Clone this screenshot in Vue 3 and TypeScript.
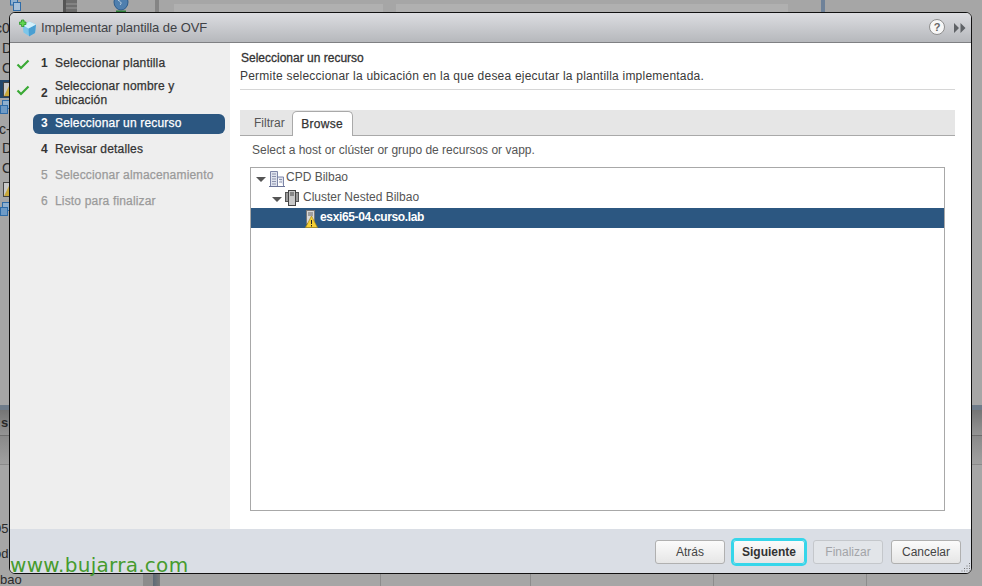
<script setup lang="ts">
interface Step { n: number; label: string; state: 'done' | 'active' | 'todo' | 'off' }
const steps: Step[] = [
  { n: 1, label: 'Seleccionar plantilla', state: 'done' },
  { n: 2, label: 'Seleccionar nombre y ubicación', state: 'done' },
  { n: 3, label: 'Seleccionar un recurso', state: 'active' },
  { n: 4, label: 'Revisar detalles', state: 'todo' },
  { n: 5, label: 'Seleccionar almacenamiento', state: 'off' },
  { n: 6, label: 'Listo para finalizar', state: 'off' },
]
const gridLines: number[] = [380, 530, 713, 866]
const blueIconTops: number[] = [100, 202]
const yellowIconTops: number[] = [82, 182]
</script>

<template>
  <div class="page">
    <div class="panel p1"></div>
    <div class="panel p2"></div>
    <div class="band"></div>
    <div class="band2"></div>
    <div class="vbar"></div>
    <div class="vbar2"></div>
    <div class="vbar3"></div>
    <i v-for="x in gridLines" :key="x" class="gline" :style="{ left: x + 'px' }"></i>
    <div class="block"></div>

    <div class="bg-frag f1">c0</div>
    <div class="bg-frag f2">D</div>
    <div class="bg-frag f3">C</div>
    <div class="bg-frag f4">c-</div>
    <div class="bg-frag f5">D</div>
    <div class="bg-frag f6">C</div>
    <div class="bg-frag f7">s</div>
    <div class="bg-frag f8">05</div>
    <div class="bg-frag f9">od</div>
    <div class="bg-frag f10">bao</div>

    <svg class="bg-icon" style="left:10px;top:0" width="11" height="12" viewBox="0 0 11 12"><rect x=".5" y="-3" width="7" height="8" fill="#8fb0cf" stroke="#2f6ca8"/><rect x="3.5" y="2.500" width="7" height="8" fill="#a5c0da" stroke="#2f6ca8"/></svg>
    <svg class="bg-icon" style="left:63px;top:0" width="14" height="12" viewBox="0 0 14 12"><rect width="14" height="12" fill="#6d6d6d"/><path d="M0 4h14M0 8h14" stroke="#9a9a9a"/><rect width="3" height="12" fill="#555"/></svg>
    <svg class="bg-icon" style="left:113px;top:0" width="16" height="13" viewBox="0 0 16 13"><ellipse cx="8" cy="2" rx="7" ry="8" fill="#4f7fae" stroke="#2c5c8c"/><path d="M5 0c3 2 4 3 2 5" stroke="#c6d8e6" fill="none"/><rect x="3" y="10.500" width="10" height="2" fill="#2f7f3a"/></svg>
    <svg v-for="t in yellowIconTops" :key="'y' + t" class="bg-icon" :style="{ left: '3px', top: t + 'px' }" width="6" height="15" viewBox="0 0 6 15"><rect x=".5" y=".5" width="9" height="14" fill="#c9c9c9" stroke="#444"/><path d="M6 4L1 14h5z" fill="#c8a83a"/></svg>
    <svg v-for="t in blueIconTops" :key="'b' + t" class="bg-icon" :style="{ left: '0', top: t + 'px' }" width="9" height="15" viewBox="0 0 9 15"><rect x="2.500" y=".5" width="7" height="8" fill="#8fb0cf" stroke="#2f6ca8"/><rect x=".5" y="5.500" width="7" height="8" fill="#6f9bc6" stroke="#2f6ca8"/></svg>

    <section class="dialog">
      <header class="title">
        <svg class="logo" width="18" height="18" viewBox="0 0 18 18">
          <path d="M3.500 6l7-3.500 6.500 3-1 8.500-6 3-5.500-3.500z" fill="#7cc6ea"/>
          <path d="M9.500 9.500l7.500-4-1 8.500-6 3.500z" fill="#4a9fd2"/>
          <path d="M3.500 6l7-3.500 6.500 3-7.500 4z" fill="#d3f0fb"/>
          <path d="M2.500 1h2.500v2h2v2.500h-2v2H2.500v-2h-2V3h2z" fill="#62d552" stroke="#1f8f1f" stroke-width=".7"/>
        </svg>
        <span class="title-text">Implementar plantilla de OVF</span>
        <span class="help">?</span>
        <svg class="more" width="12" height="10" viewBox="0 0 12 10"><path d="M0 0l5 5-5 5zM6.500 0l5 5-5 5z" fill="#5f6266"/></svg>
      </header>

      <div class="body">
        <nav class="nav">
          <div v-for="s in steps" :key="s.n" class="step" :class="s.state">
            <svg v-if="s.state === 'done'" class="check" width="14" height="11" viewBox="0 0 14 11"><path d="M1.500 5.500l3.500 3.500 7.500-7.500" fill="none" stroke="#3aa935" stroke-width="2.200"/></svg>
            <div class="pill">
              <span class="num">{{ s.n }}</span>
              <span class="lbl">{{ s.label }}</span>
            </div>
          </div>
        </nav>

        <main class="main">
          <h2 class="h">Seleccionar un recurso</h2>
          <p class="sub">Permite seleccionar la ubicación en la que desea ejecutar la plantilla implementada.</p>
          <div class="tabs">
            <span class="tab">Filtrar</span>
            <span class="tab on">Browse</span>
          </div>
          <p class="hint">Select a host or clúster or grupo de recursos or vapp.</p>
          <div class="tree">
            <div class="row r0">
              <i class="tri"></i>
              <svg class="ico" width="16" height="17" viewBox="0 0 16 17"><path d="M1.500 16V1.500h7V16M8.500 7h6v9" fill="#dfe3ee" stroke="#7e86a8"/><path d="M3 4h4M3 6.500h4M3 9h4M3 11.500h4M3 14h4M10 9.500h3M10 12h3" stroke="#8d93ad"/><path d="M0 16.500h16" stroke="#6c7498"/></svg>
              <span>CPD Bilbao</span>
            </div>
            <div class="row r1">
              <i class="tri"></i>
              <svg class="ico" width="14" height="16" viewBox="0 0 14 16"><rect x="0.500" y="2.500" width="3" height="9" fill="#9a9a9a" stroke="#555"/><rect x="10.500" y="2.500" width="3" height="9" fill="#9a9a9a" stroke="#555"/><rect x="3.500" y="0.500" width="7" height="15" fill="#c9c9c9" stroke="#444"/><path d="M5 3h4M5 5h4" stroke="#444"/></svg>
              <span>Cluster Nested Bilbao</span>
            </div>
            <div class="row sel">
              <svg class="ico" width="13" height="18" viewBox="0 0 13 18"><rect x="1.500" y="0.500" width="8" height="13" fill="#d8d8d8" stroke="#777"/><path d="M3 3h5M3 5h5" stroke="#666"/><path d="M6.500 6l6 11.500H.5z" fill="#f5cf35" stroke="#a98a16" stroke-width=".7"/><path d="M6.500 10v4M6.500 15v1.500" stroke="#222"/></svg>
              <span>esxi65-04.curso.lab</span>
            </div>
          </div>
        </main>
      </div>

      <footer class="foot">
        <button class="btn">Atrás</button>
        <button class="btn primary">Siguiente</button>
        <button class="btn dis">Finalizar</button>
        <button class="btn">Cancelar</button>
        <svg class="grip" width="11" height="11" viewBox="0 0 11 11"><path d="M9 1h1v1H9zM6.500 3.500h1v1h-1zM9 3.500h1v1H9zM4 6h1v1H4zM6.500 6h1v1h-1zM9 6h1v1H9zM1.500 8.500h1v1h-1zM4 8.500h1v1H4zM6.500 8.500h1v1h-1zM9 8.500h1v1H9z" fill="#777"/></svg>
      </footer>
    </section>

    <div class="mark">www.bujarra.com</div>
  </div>
</template>

<style>
html, body { margin: 0; }
</style>

<style scoped>
.page {
  position: relative;
  width: 982px;
  height: 586px;
  overflow: hidden;
  background: #a6a6a6;
  font-family: "Liberation Sans", Arial, sans-serif;
  font-size: 12px;
  color: #333;
}
.bg-frag { position: absolute; left: 2px; color: #2a2a2a; font-size: 14px; line-height: 16px; }
.f1 { top: 20px; left: -5px; } .f2 { top: 40px; } .f3 { top: 60px; } .f4 { top: 121px; left: -1px; }
.f5 { top: 140px; } .f6 { top: 160px; } .f7 { top: 415px; left: 1px; font-weight: 700; font-size: 13px; }
.f8 { top: 521px; left: -6px; font-size: 13px; }
.f9 { top: 546px; left: -6px; font-size: 13px; }
.f10 { top: 574px; left: 0; font-size: 13px; line-height: 12px; }
.panel { position: absolute; top: 4px; height: 8px; background: #b0b0b0; }
.p1 { left: 174px; width: 209px; }
.p2 { left: 396px; width: 392px; }
.band {
  position: absolute; left: 0; right: 0; top: 405px; height: 31px; box-sizing: border-box;
  background: linear-gradient(#757575, #949494); border-top: 5px solid #6f7c8a; border-bottom: 1px solid #6e6e6e;
}
.band2 {
  position: absolute; left: 0; right: 0; top: 436px; height: 29px;
  background: linear-gradient(#8a8a8a, #a0a0a0); border-bottom: 1px solid #8a8a8a; box-sizing: border-box;
}
.vbar { position: absolute; left: 143px; top: 573px; width: 17px; height: 13px; background: linear-gradient(90deg, #8c8c8c 60%, #5e6a76 60%, #7a7a7a); }
.vbar2 { position: absolute; left: 821px; top: 0; width: 4px; height: 12px; background: #6f8299; }
.vbar3 { position: absolute; left: 155px; top: 0; width: 4px; height: 12px; background: #858585; }
.gline { position: absolute; top: 573px; width: 1px; height: 13px; background: #8c8c8c; }
.block { position: absolute; left: 0; top: 80px; width: 9px; height: 18px; background: #22466a; }
.bg-icon { position: absolute; }

.dialog {
  position: absolute;
  left: 9px;
  top: 12px;
  width: 963px;
  height: 562px;
  box-sizing: border-box;
  border: 1px solid #111;
  border-radius: 6px;
  background: #fff;
  display: flex;
  flex-direction: column;
  overflow: hidden;
}
.title {
  height: 30px;
  flex: none;
  box-sizing: border-box;
  display: flex;
  align-items: center;
  padding: 0 5px 0 9px;
  background: linear-gradient(#dcdde1, #b6b8bc);
  border-bottom: 1px solid #7f8083;
}
.logo { margin-right: 4px; margin-top: 1px; }
.title-text { flex: 1; font-size: 13px; color: #3e4145; letter-spacing: -.08px; }
.help {
  width: 14px; height: 14px;
  border-radius: 50%;
  background: #f7f7f7;
  border: 1px solid #8e8e8e;
  font-size: 11px; font-weight: 700; line-height: 14px; text-align: center; color: #666;
  margin: -1px 9px 0 0;
}
.body { flex: 1; display: flex; min-height: 0; }
.nav {
  width: 220px;
  flex: none;
  background: #eeeeee;
  box-sizing: border-box;
  padding: 9px 5px 0 23px;
}
.step { position: relative; margin-bottom: 4px; color: #333; letter-spacing: .17px; -webkit-text-stroke: .25px currentColor; }
.check { position: absolute; left: -17px; top: 7px; }
.pill { display: flex; align-items: center; padding: 4px 8px; line-height: 14px; }
.num { width: 14px; flex: none; font-weight: 700; letter-spacing: 0; -webkit-text-stroke: 0; }
.lbl { flex: 1; }
.step:nth-child(2) .pill { padding-top: 1px; padding-bottom: 3px; }
.step.active .pill { background: #2c5781; color: #fff; border-radius: 6px; padding: 2px 8px 4px; }
.step.off { color: #9a9a9a; }
.step.off .num { font-weight: 400; -webkit-text-stroke: .25px currentColor; }

.main { flex: 1; box-sizing: border-box; padding: 8px 16px 0 10px; min-width: 0; display: flex; flex-direction: column; }
.h { margin: 0 0 0 1px; font-size: 12px; font-weight: 400; line-height: 14px; color: #333; -webkit-text-stroke: .3px #333; }
.sub { margin: 4px 0 0; font-size: 12px; line-height: 14px; letter-spacing: .22px; padding-bottom: 6px; border-bottom: 1px solid #d6d6d6; color: #3a3a3a; }
.tabs {
  margin-top: 20px;
  height: 26px;
  background: #e6e6e6;
  border-bottom: 1px solid #a9a9a9;
  display: flex;
  align-items: flex-end;
  padding-left: 14px;
  gap: 8px;
  box-sizing: border-box;
}
.tab { line-height: 22px; height: 22px; color: #555; position: relative; top: -1px; }
.tab.on {
  top: 1px;
  height: 24px;
  line-height: 25px;
  width: 59px;
  text-align: center;
  background: #fff;
  color: #333;
  border: 1px solid #a9a9a9;
  border-bottom: 0;
  border-radius: 5px 5px 0 0;
  letter-spacing: .3px;
  -webkit-text-stroke: .25px #333;
  margin-left: -1px;
}
.hint { margin: 7px 0 0 12px; line-height: 14px; color: #555; }
.tree {
  margin: 10px 10px 0 10px;
  height: 344px;
  border: 1px solid #a8a8a8;
  box-sizing: border-box;
}
.row { height: 20px; display: flex; align-items: center; color: #555; }
.row span { position: relative; top: -1px; }
.tri { width: 0; height: 0; border-left: 5px solid transparent; border-right: 5px solid transparent; border-top: 5px solid #555; margin-top: 3px; }
.r0 { padding-left: 5px; }
.r0 .ico { margin: 0 1px 0 3px; }
.r1 { padding-left: 21px; }
.r1 .ico { margin: 0 4px 0 3px; }
.sel { background: #2c5781; color: #fff; padding-left: 54px; font-weight: 700; letter-spacing: -.35px; }
.sel .ico { margin-right: 2px; margin-top: 2px; }

.foot {
  position: relative;
  height: 44px;
  flex: none;
  background: #dadee5;
  display: flex;
  align-items: center;
  justify-content: flex-end;
  padding: 0 10px 0 0;
  box-sizing: border-box;
  gap: 8px;
}
.btn {
  font: 12px "Liberation Sans", Arial, sans-serif;
  height: 24px;
  width: 70px;
  padding: 0;
  border: 1px solid #b0b0b0;
  border-radius: 3px;
  background: linear-gradient(#fbfbfb, #e6e6e6);
  color: #444;
  position: relative;
  top: 1px;
}
.primary { font-weight: 700; width: 72px; box-shadow: 0 0 0 2px #36d6ea; border-color: #36d6ea; color: #333; }
.dis { background: #e2e5e9; border-color: #c4c7cb; color: #a2a4a8; }
.grip { position: absolute; right: 0; bottom: 0; }
.mark {
  position: absolute;
  left: 10px;
  top: 553px;
  font-family: "DejaVu Sans", sans-serif;
  font-size: 20px;
  line-height: 24px;
  color: #479b2e;
  letter-spacing: .28px;
}
</style>
